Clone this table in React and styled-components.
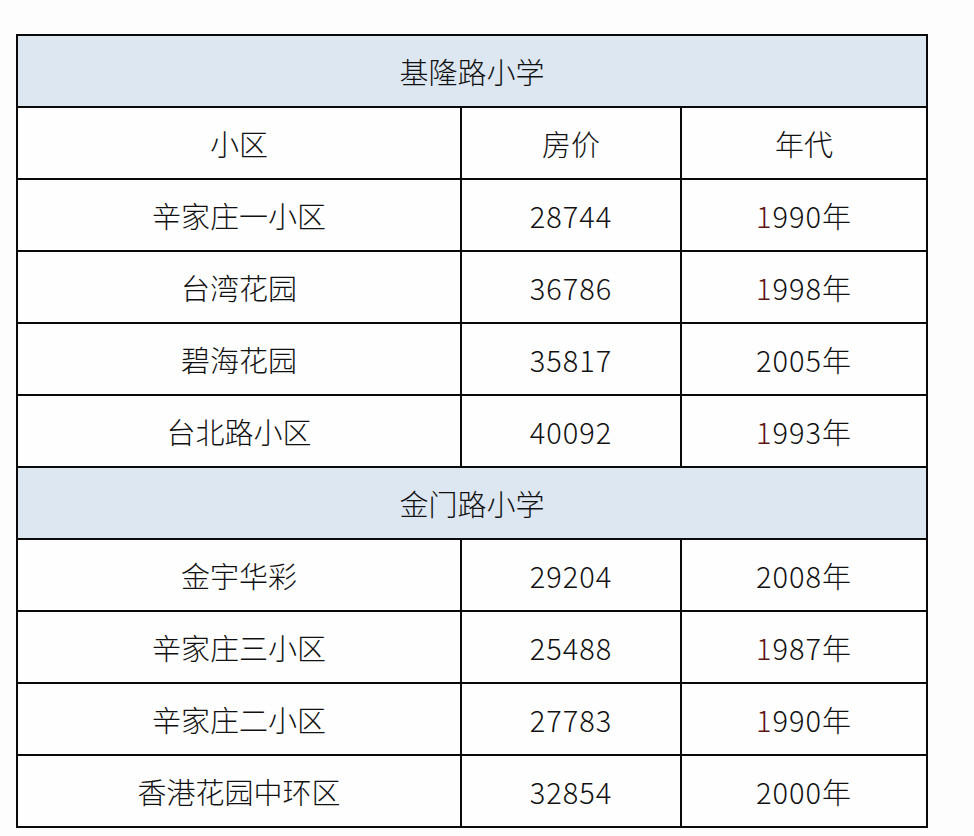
import React from "react";
import styled, { createGlobalStyle } from "styled-components";

const GlobalStyle = createGlobalStyle`
  body {
    margin: 0;
    background: #fdfdfd;
    font-family: "Noto Sans CJK SC", "Noto Sans", sans-serif;
  }
`;

const Page = styled.div`
  padding: 34px 0 0 16px;
  width: 974px;
  height: 836px;
  box-sizing: border-box;
`;

const Table = styled.div`
  width: 912px;
  display: grid;
  grid-template-columns: 442px 218px 244px;
  grid-auto-rows: 70px;
  gap: 2px;
  padding: 2px;
  box-sizing: border-box;
  background: #0a0a0a;
`;

const Cell = styled.div`
  background: ${(p) => (p.$group ? "#dde7f2" : "#fefefe")};
  grid-column: ${(p) => (p.$group ? "1 / -1" : "auto")};
  display: flex;
  align-items: center;
  justify-content: center;
  font-size: 29px;
  font-weight: 300;
  color: #111;
  letter-spacing: ${(p) => (p.$num ? "1px" : "0")};
`;

const Lead = styled.span`
  color: #5c1414;
`;

const groups = [
  {
    name: "基隆路小学",
    rows: [
      ["辛家庄一小区", "28744", "1990"],
      ["台湾花园", "36786", "1998"],
      ["碧海花园", "35817", "2005"],
      ["台北路小区", "40092", "1993"],
    ],
  },
  {
    name: "金门路小学",
    rows: [
      ["金宇华彩", "29204", "2008"],
      ["辛家庄三小区", "25488", "1987"],
      ["辛家庄二小区", "27783", "1990"],
      ["香港花园中环区", "32854", "2000"],
    ],
  },
];

const Year = ({ value }) =>
  value.startsWith("1") ? (
    <>
      <Lead>1</Lead>
      {value.slice(1)}年
    </>
  ) : (
    <>{value}年</>
  );

const App = () => (
  <Page>
    <GlobalStyle />
    <Table>
      {groups.map((g, gi) => (
        <React.Fragment key={g.name}>
          <Cell $group>{g.name}</Cell>
          {gi === 0 && (
            <>
              <Cell>小区</Cell>
              <Cell>房价</Cell>
              <Cell>年代</Cell>
            </>
          )}
          {g.rows.map(([name, price, year]) => (
            <React.Fragment key={name}>
              <Cell>{name}</Cell>
              <Cell $num>{price}</Cell>
              <Cell $num>
                <Year value={year} />
              </Cell>
            </React.Fragment>
          ))}
        </React.Fragment>
      ))}
    </Table>
  </Page>
);

export default App;
